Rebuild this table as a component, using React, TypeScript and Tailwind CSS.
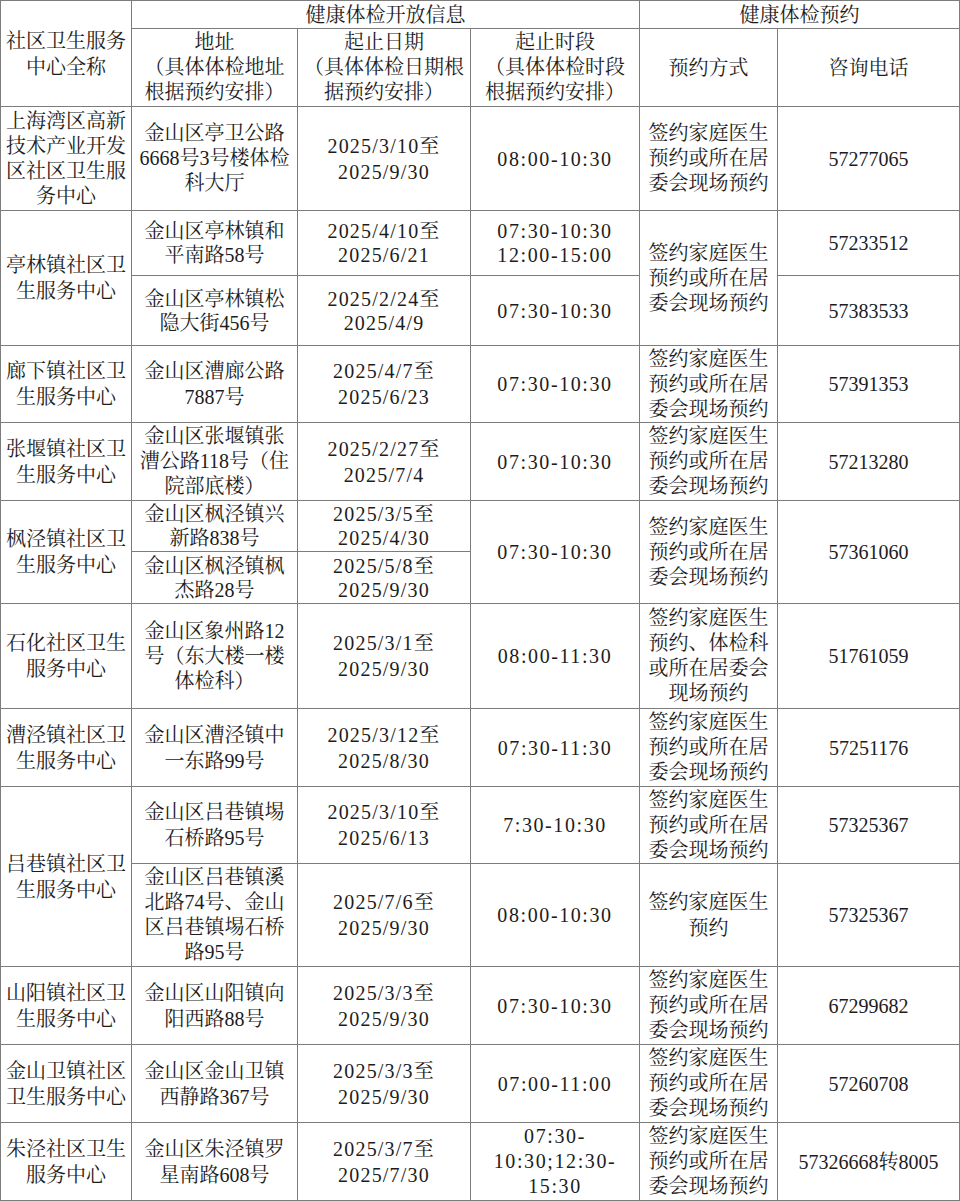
import type { ReactNode } from 'react';

const font = 'font-["Liberation_Serif","Noto_Serif_CJK_SC","Noto_Sans_CJK_SC",serif]';

type CellProps = {
  lines: string[];
  rowSpan?: number;
  colSpan?: number;
  track?: string;
  lh?: string;
  head?: boolean;
};

function Cell({ lines, rowSpan, colSpan, track = '', lh = 'leading-[26px]', head }: CellProps) {
  const body: ReactNode[] = [];
  lines.forEach((line, i) => {
    if (i > 0) body.push(<br key={`b${i}`} />);
    body.push(line);
  });
  const Tag = head ? 'th' : 'td';
  return (
    <Tag
      rowSpan={rowSpan}
      colSpan={colSpan}
      className={`border border-[#7c7c7c] p-0 text-center align-middle font-normal whitespace-nowrap ${lh} ${track}`}
    >
      {body}
    </Tag>
  );
}

const SIGN = ['签约家庭医生', '预约或所在居', '委会现场预约'];
const DATE = 'tracking-[1.2px]';
const TIME = 'tracking-[1.6px]';
const TIGHT = 'leading-[25px]';
const SHORT = 'leading-[24px]';

export default function App() {
  return (
    <div className={`w-[960px] bg-white text-[20px] leading-[26px] text-[#1c1c1c] ${font}`}>
      <table className="w-[959px] table-fixed border-collapse">
        <colgroup>
          <col className="w-[131px]" />
          <col className="w-[166px]" />
          <col className="w-[173px]" />
          <col className="w-[169px]" />
          <col className="w-[138px]" />
          <col className="w-[182px]" />
        </colgroup>
        <thead>
          <tr className="h-[28px]">
            <Cell head rowSpan={2} lines={['社区卫生服务', '中心全称']} />
            <Cell head colSpan={3} lines={['健康体检开放信息']} />
            <Cell head colSpan={2} lines={['健康体检预约']} />
          </tr>
          <tr className="h-[78px]">
            <Cell head lh={TIGHT} lines={['地址', '（具体体检地址', '根据预约安排）']} />
            <Cell head lh={TIGHT} lines={['起止日期', '（具体体检日期根', '据预约安排）']} />
            <Cell head lh={TIGHT} lines={['起止时段', '（具体体检时段', '根据预约安排）']} />
            <Cell head lines={['预约方式']} />
            <Cell head lines={['咨询电话']} />
          </tr>
        </thead>
        <tbody>
          <tr className="h-[104px]">
            <Cell lh={TIGHT} lines={['上海湾区高新', '技术产业开发', '区社区卫生服', '务中心']} />
            <Cell lh={TIGHT} lines={['金山区亭卫公路', '6668号3号楼体检', '科大厅']} />
            <Cell track={DATE} lines={['2025/3/10至', '2025/9/30']} />
            <Cell track={TIME} lines={['08:00-10:30']} />
            <Cell lh={TIGHT} lines={SIGN} />
            <Cell lines={['57277065']} />
          </tr>
          <tr className="h-[65px]">
            <Cell rowSpan={2} lines={['亭林镇社区卫', '生服务中心']} />
            <Cell lh={SHORT} lines={['金山区亭林镇和', '平南路58号']} />
            <Cell lh={SHORT} track={DATE} lines={['2025/4/10至', '2025/6/21']} />
            <Cell lh={SHORT} track={TIME} lines={['07:30-10:30', '12:00-15:00']} />
            <Cell rowSpan={2} lh={TIGHT} lines={SIGN} />
            <Cell lines={['57233512']} />
          </tr>
          <tr className="h-[70px]">
            <Cell lh={SHORT} lines={['金山区亭林镇松', '隐大街456号']} />
            <Cell lh={SHORT} track={DATE} lines={['2025/2/24至', '2025/4/9']} />
            <Cell track={TIME} lines={['07:30-10:30']} />
            <Cell lines={['57383533']} />
          </tr>
          <tr className="h-[77px]">
            <Cell lines={['廊下镇社区卫', '生服务中心']} />
            <Cell lines={['金山区漕廊公路', '7887号']} />
            <Cell track={DATE} lines={['2025/4/7至', '2025/6/23']} />
            <Cell track={TIME} lines={['07:30-10:30']} />
            <Cell lh={TIGHT} lines={SIGN} />
            <Cell lines={['57391353']} />
          </tr>
          <tr className="h-[78px]">
            <Cell lines={['张堰镇社区卫', '生服务中心']} />
            <Cell lh={TIGHT} lines={['金山区张堰镇张', '漕公路118号（住', '院部底楼）']} />
            <Cell track={DATE} lines={['2025/2/27至', '2025/7/4']} />
            <Cell track={TIME} lines={['07:30-10:30']} />
            <Cell lh={TIGHT} lines={SIGN} />
            <Cell lines={['57213280']} />
          </tr>
          <tr className="h-[51px]">
            <Cell rowSpan={2} lines={['枫泾镇社区卫', '生服务中心']} />
            <Cell lh={SHORT} lines={['金山区枫泾镇兴', '新路838号']} />
            <Cell lh={SHORT} track={DATE} lines={['2025/3/5至', '2025/4/30']} />
            <Cell rowSpan={2} track={TIME} lines={['07:30-10:30']} />
            <Cell rowSpan={2} lh={TIGHT} lines={SIGN} />
            <Cell rowSpan={2} lines={['57361060']} />
          </tr>
          <tr className="h-[52px]">
            <Cell lh={SHORT} lines={['金山区枫泾镇枫', '杰路28号']} />
            <Cell lh={SHORT} track={DATE} lines={['2025/5/8至', '2025/9/30']} />
          </tr>
          <tr className="h-[105px]">
            <Cell lines={['石化社区卫生', '服务中心']} />
            <Cell lh={TIGHT} lines={['金山区象州路12', '号（东大楼一楼', '体检科）']} />
            <Cell track={DATE} lines={['2025/3/1至', '2025/9/30']} />
            <Cell track={TIME} lines={['08:00-11:30']} />
            <Cell lh={TIGHT} lines={['签约家庭医生', '预约、体检科', '或所在居委会', '现场预约']} />
            <Cell lines={['51761059']} />
          </tr>
          <tr className="h-[78px]">
            <Cell lines={['漕泾镇社区卫', '生服务中心']} />
            <Cell lines={['金山区漕泾镇中', '一东路99号']} />
            <Cell track={DATE} lines={['2025/3/12至', '2025/8/30']} />
            <Cell track={TIME} lines={['07:30-11:30']} />
            <Cell lh={TIGHT} lines={SIGN} />
            <Cell lines={['57251176']} />
          </tr>
          <tr className="h-[77px]">
            <Cell rowSpan={2} lines={['吕巷镇社区卫', '生服务中心']} />
            <Cell lines={['金山区吕巷镇埸', '石桥路95号']} />
            <Cell track={DATE} lines={['2025/3/10至', '2025/6/13']} />
            <Cell track={TIME} lines={['7:30-10:30']} />
            <Cell lh={TIGHT} lines={SIGN} />
            <Cell lines={['57325367']} />
          </tr>
          <tr className="h-[103px]">
            <Cell lh={TIGHT} lines={['金山区吕巷镇溪', '北路74号、金山', '区吕巷镇埸石桥', '路95号']} />
            <Cell track={DATE} lines={['2025/7/6至', '2025/9/30']} />
            <Cell track={TIME} lines={['08:00-10:30']} />
            <Cell lines={['签约家庭医生', '预约']} />
            <Cell lines={['57325367']} />
          </tr>
          <tr className="h-[78px]">
            <Cell lines={['山阳镇社区卫', '生服务中心']} />
            <Cell lines={['金山区山阳镇向', '阳西路88号']} />
            <Cell track={DATE} lines={['2025/3/3至', '2025/9/30']} />
            <Cell track={TIME} lines={['07:30-10:30']} />
            <Cell lh={TIGHT} lines={SIGN} />
            <Cell lines={['67299682']} />
          </tr>
          <tr className="h-[78px]">
            <Cell lines={['金山卫镇社区', '卫生服务中心']} />
            <Cell lines={['金山区金山卫镇', '西静路367号']} />
            <Cell track={DATE} lines={['2025/3/3至', '2025/9/30']} />
            <Cell track={TIME} lines={['07:00-11:00']} />
            <Cell lh={TIGHT} lines={SIGN} />
            <Cell lines={['57260708']} />
          </tr>
          <tr className="h-[78px]">
            <Cell lines={['朱泾社区卫生', '服务中心']} />
            <Cell lines={['金山区朱泾镇罗', '星南路608号']} />
            <Cell track={DATE} lines={['2025/3/7至', '2025/7/30']} />
            <Cell lh={TIGHT} track={TIME} lines={['07:30-', '10:30;12:30-', '15:30']} />
            <Cell lh={TIGHT} lines={SIGN} />
            <Cell lines={['57326668转8005']} />
          </tr>
        </tbody>
      </table>
    </div>
  );
}
